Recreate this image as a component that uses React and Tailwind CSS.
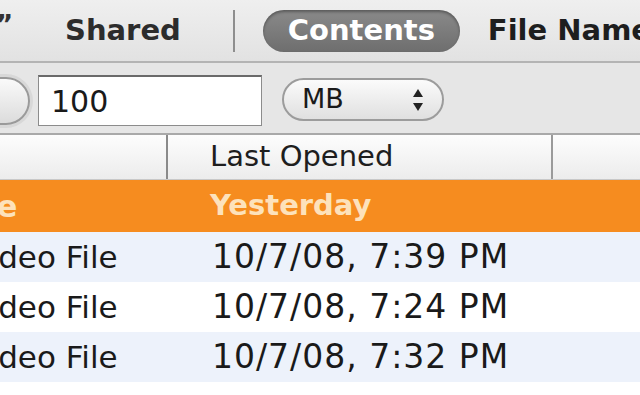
import React from "react";

const font = { fontFamily: '"DejaVu Sans", "Liberation Sans", sans-serif' };

function Row({ bg, date }) {
  return (
    <div className={`flex h-[50px] items-center ${bg}`}>
      <div className="w-[168px] shrink-0 overflow-hidden whitespace-nowrap">
        <span className="ml-[-31px] inline-block text-[31px] text-[#1a1a1a]">Video File</span>
      </div>
      <div className="shrink-0 pl-[44px] whitespace-nowrap text-[33px] tracking-[1px] text-[#1a1a1a]">{date}</div>
    </div>
  );
}

export default function App() {
  return (
    <div className="w-[640px] h-[395px] overflow-hidden bg-white" style={font}>
      {/* top scope bar */}
      <div className="relative flex h-[63px] items-center overflow-hidden border-b-2 border-[#b4b4b4] bg-gradient-to-b from-[#efefef] to-[#e2e2e2] whitespace-nowrap">
        <span className="absolute left-[-4px] top-[6px] text-[26px] font-bold text-[#333]">”</span>
        <span className="ml-[65px] shrink-0 text-[29px] font-bold text-[#2c2c2c]">Shared</span>
        <div className="ml-[52px] h-[42px] w-[2px] shrink-0 bg-[#8e8e8e]" />
        <div className="ml-[28px] flex h-[42px] w-[197px] shrink-0 items-center justify-center rounded-full bg-gradient-to-b from-[#8a8a8a] to-[#6e6e6e] shadow-[inset_0_2px_3px_rgba(0,0,0,0.35)]">
          <span className="text-[29px] font-bold text-white">Contents</span>
        </div>
        <span className="ml-[28px] shrink-0 text-[29px] font-bold text-[#1e1e1e]">File Name</span>
      </div>

      {/* criteria bar */}
      <div className="relative flex h-[72px] items-start border-b-2 border-[#a9a9a9] bg-[#e6e6e6] whitespace-nowrap">
        <div className="absolute left-[-28px] top-[14px] h-[48px] w-[58px] rounded-full border-2 border-[#9a9a9a] bg-gradient-to-b from-[#fafafa] to-[#dcdcdc] shadow-[0_0_0_3px_#d8d8d8]" />
        <div className="ml-[38px] mt-[12px] flex h-[51px] w-[224px] shrink-0 items-center border border-[#8c8c8c] border-t-2 border-t-[#6a6a6a] bg-white pl-[12px]">
          <span className="text-[30px] text-[#1a1a1a]">100</span>
        </div>
        <div className="ml-[20px] mt-[15px] flex h-[43px] w-[162px] shrink-0 items-center justify-between rounded-full border-2 border-[#9c9c9c] bg-gradient-to-b from-[#fbfbfb] to-[#e0e0e0] pl-[18px] pr-[18px]">
          <span className="text-[27px] text-[#1a1a1a]">MB</span>
          <svg width="12" height="26" viewBox="0 0 12 26">
            <path d="M6 2 L11 10 L1 10 Z" fill="#222" />
            <path d="M6 24 L11 16 L1 16 Z" fill="#222" />
          </svg>
        </div>
      </div>

      {/* column header */}
      <div className="flex h-[45px] items-center border-b border-[#c8c8c8] bg-gradient-to-b from-[#fdfdfd] to-[#ececec] whitespace-nowrap">
        <div className="h-full w-[168px] shrink-0 border-r-2 border-[#8a8a8a]" />
        <div className="flex h-full w-[385px] shrink-0 items-center border-r-2 border-[#9a9a9a] pl-[42px]">
          <span className="text-[29px] text-[#1e1e1e]">Last Opened</span>
        </div>
      </div>

      {/* selected row */}
      <div className="flex h-[52px] items-center bg-[#f68c1f] whitespace-nowrap">
        <div className="w-[168px] shrink-0 overflow-hidden">
          <span className="ml-[-3px] text-[30px] font-bold text-[#fde2bb]">e</span>
        </div>
        <div className="pl-[42px] text-[29px] font-bold text-[#fde2bb]">Yesterday</div>
      </div>

      <Row bg="bg-[#edf2fb]" date="10/7/08, 7:39 PM" />
      <Row bg="bg-white" date="10/7/08, 7:24 PM" />
      <Row bg="bg-[#edf2fb]" date="10/7/08, 7:32 PM" />
      <div className="h-[20px] bg-white" />
    </div>
  );
}
